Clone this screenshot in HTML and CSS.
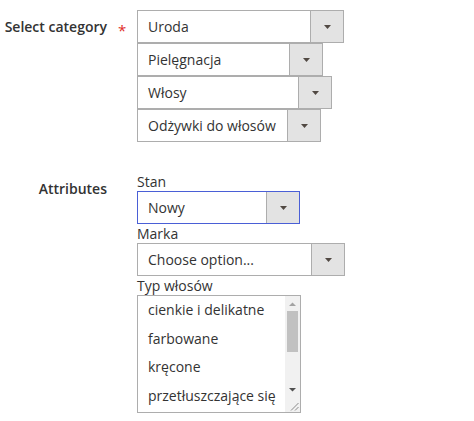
FILE: index.html
```html
<!DOCTYPE html>
<html lang="pl">
<head>
<meta charset="utf-8">
<title>Select category</title>
<link rel="stylesheet" href="styles.css">
</head>
<body>
<div class="form">
  <div class="field field-required">
    <div class="field-label"><span class="label-text">Select category</span></div>
    <div class="control">
      <div class="select w-207"><span class="select-value">Uroda</span><span class="select-btn"><svg width="7" height="4" viewBox="0 0 7 4"><polygon points="0,0 7,0 3.5,4" fill="#514943"/></svg></span></div>
      <div class="select w-186"><span class="select-value">Pielęgnacja</span><span class="select-btn"><svg width="7" height="4" viewBox="0 0 7 4"><polygon points="0,0 7,0 3.5,4" fill="#514943"/></svg></span></div>
      <div class="select w-195"><span class="select-value">Włosy</span><span class="select-btn"><svg width="7" height="4" viewBox="0 0 7 4"><polygon points="0,0 7,0 3.5,4" fill="#514943"/></svg></span></div>
      <div class="select w-184"><span class="select-value">Odżywki do włosów</span><span class="select-btn"><svg width="7" height="4" viewBox="0 0 7 4"><polygon points="0,0 7,0 3.5,4" fill="#514943"/></svg></span></div>
    </div>
  </div>
  <div class="field">
    <div class="field-label"><span class="label-text">Attributes</span></div>
    <div class="control">
      <div class="sub-label">Stan</div>
      <div class="select select-focus w-163"><span class="select-value">Nowy</span><span class="select-btn"><svg width="7" height="4" viewBox="0 0 7 4"><polygon points="0,0 7,0 3.5,4" fill="#514943"/></svg></span></div>
      <div class="sub-label">Marka</div>
      <div class="select w-208"><span class="select-value">Choose option...</span><span class="select-btn"><svg width="7" height="4" viewBox="0 0 7 4"><polygon points="0,0 7,0 3.5,4" fill="#514943"/></svg></span></div>
      <div class="sub-label">Typ włosów</div>
      <div class="multi">
        <div class="options">
          <div class="option">cienkie i delikatne</div>
          <div class="option">farbowane</div>
          <div class="option">kręcone</div>
          <div class="option">przetłuszczające się</div>
        </div>
        <div class="scrollbar">
          <div class="sb-btn"><svg width="7" height="4" viewBox="0 0 7 4"><polygon points="0,4 7,4 3.5,0.5" fill="#a3a3a3"/></svg></div>
          <div class="sb-thumb"></div>
          <div class="sb-track"></div>
          <div class="sb-btn"><svg width="7" height="4" viewBox="0 0 7 4"><polygon points="0,0 7,0 3.5,3.5" fill="#505050"/></svg></div>
          <div class="sb-corner"><svg width="15" height="15" viewBox="0 0 15 15"><line x1="13.5" y1="6" x2="6" y2="13.5" stroke="#8a8a8a" stroke-width="1"/><line x1="13.5" y1="10" x2="10" y2="13.5" stroke="#8a8a8a" stroke-width="1"/></svg></div>
        </div>
      </div>
    </div>
  </div>
</div>
</body>
</html>
```
FILE: styles.css
```css
body {
  margin: 0;
  font-family: "Open Sans", sans-serif;
  font-size: 14px;
  color: #333333;
  background: #ffffff;
}

.form {
  padding-top: 10px;
  display: flex;
  flex-direction: column;
  gap: 30px;
}

.field {
  display: grid;
  grid-template-columns: 137px auto;
}

.field-label {
  text-align: right;
  padding-right: 30px;
  padding-top: 7px;
  font-weight: 600;
  line-height: 20px;
}

.label-text {
  position: relative;
}

.field-required .label-text::after {
  content: "*";
  position: absolute;
  left: calc(100% + 11px);
  top: 3px;
  color: #e02b27;
  font-size: 15px;
  font-weight: 400;
}

.control {
  display: flex;
  flex-direction: column;
  align-items: flex-start;
}

.select {
  display: flex;
  height: 33px;
  box-sizing: border-box;
  border: 1px solid #adadad;
  background: #ffffff;
}

.select-focus {
  border-color: #4a5fd6;
}

.select-value {
  flex: 1;
  padding-left: 10px;
  line-height: 31px;
  white-space: nowrap;
}

.select-btn {
  width: 33px;
  box-sizing: border-box;
  border-left: 1px solid #adadad;
  background: #e3e3e3;
  display: flex;
  align-items: center;
  justify-content: center;
}

.w-207 { width: 207px; }
.w-186 { width: 186px; }
.w-195 { width: 195px; }
.w-184 { width: 184px; }
.w-163 { width: 163px; }
.w-208 { width: 208px; }

.sub-label {
  line-height: 19px;
}

.multi {
  width: 164px;
  height: 118px;
  box-sizing: border-box;
  border: 1px solid #adadad;
  display: flex;
  background: #ffffff;
}

.options {
  flex: 1;
  overflow: hidden;
}

.option {
  line-height: 28.5px;
  padding-left: 10px;
  white-space: nowrap;
}

.scrollbar {
  width: 15px;
  display: flex;
  flex-direction: column;
  background: #f1f1f1;
}

.sb-btn {
  height: 15px;
  display: flex;
  align-items: center;
  justify-content: center;
}

.sb-thumb {
  height: 41px;
  margin: 0 2px;
  background: #c1c1c1;
}

.sb-track {
  flex: 1;
}

.sb-corner {
  height: 15px;
  display: flex;
}
```
